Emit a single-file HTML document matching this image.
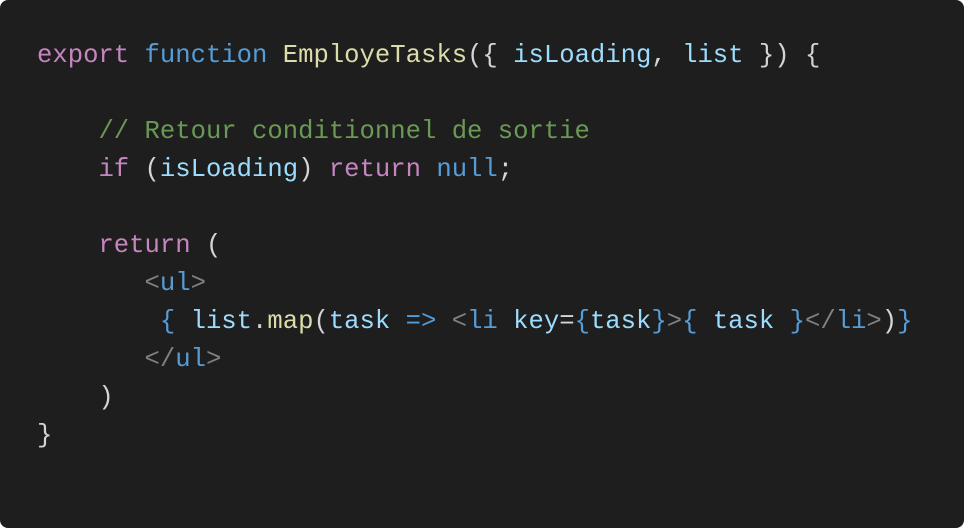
<!DOCTYPE html>
<html><head><meta charset="utf-8"><style>
html,body{margin:0;padding:0;background:#fff;}
.b{width:964px;height:528px;background:#1e1e1e;border-radius:8px;box-sizing:border-box;padding:37px 0 0 37px;}
pre{margin:0;font-family:"Liberation Mono",monospace;font-size:25.6px;line-height:38px;color:#d4d4d4;}
.k{color:#c586c0}.f{color:#569cd6}.y{color:#dcdcaa}.v{color:#9cdcfe}.c{color:#6a9955}.g{color:#808080}
</style></head><body><div class="b"><pre><span class="k">export</span> <span class="f">function</span> <span class="y">EmployeTasks</span>({ <span class="v">isLoading</span>, <span class="v">list</span> }) {

    <span class="c">// Retour conditionnel de sortie</span>
    <span class="k">if</span> (<span class="v">isLoading</span>) <span class="k">return</span> <span class="f">null</span>;

    <span class="k">return</span> (
       <span class="g">&lt;</span><span class="f">ul</span><span class="g">&gt;</span>
        <span class="f">{</span> <span class="v">list</span>.<span class="y">map</span>(<span class="v">task</span> <span class="f">=&gt;</span> <span class="g">&lt;</span><span class="f">li</span> <span class="v">key</span>=<span class="f">{</span><span class="v">task</span><span class="f">}</span><span class="g">&gt;</span><span class="f">{</span> <span class="v">task</span> <span class="f">}</span><span class="g">&lt;/</span><span class="f">li</span><span class="g">&gt;</span>)<span class="f">}</span>
       <span class="g">&lt;/</span><span class="f">ul</span><span class="g">&gt;</span>
    )
}</pre></div></body></html>
